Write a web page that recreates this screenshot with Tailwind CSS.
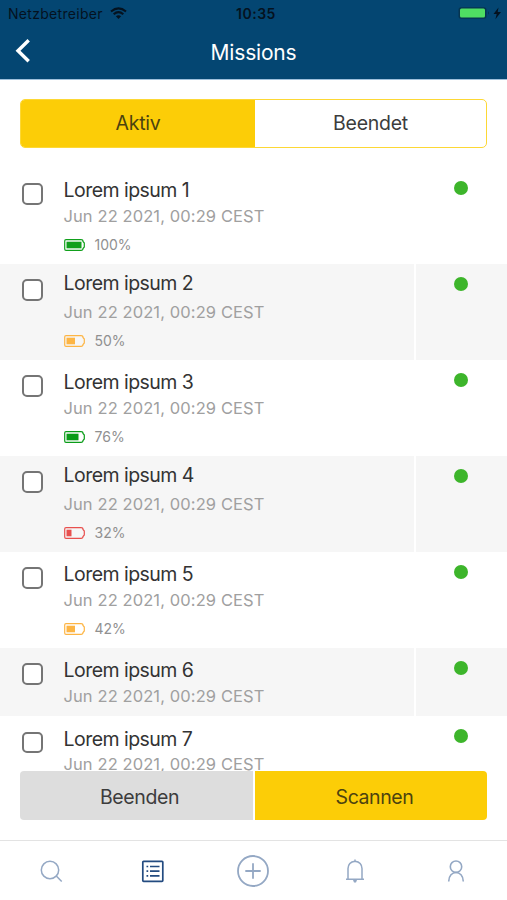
<!DOCTYPE html>
<html lang="de">
<head>
<meta charset="utf-8">
<title>Missions</title>
<script src="https://cdn.jsdelivr.net/npm/@tailwindcss/browser@4"></script>
</head>
<body class="bg-white">
<div class="relative flex h-[900px] w-[507px] flex-col overflow-hidden bg-white font-['Inter','Liberation_Sans',sans-serif] text-[#3c3c3c]">
  <header class="h-20 shrink-0 border-b border-[#9fc0dc] bg-[#044672]">
    <div class="grid h-7 grid-cols-3 items-center pr-1.5 pl-2 text-[14px] text-[#04121f]">
      <div class="-mt-0.5 flex items-center gap-[7px]">
        <span class="tracking-[0.3px]">Netzbetreiber</span>
        <svg class="h-3 w-[17px]" viewBox="0 0 17 12" fill="none" stroke="currentColor" stroke-width="2.1"><path d="M1 4.5Q8.500-1.800 16 4.500M3.700 7.300Q8.500 3 13.300 7.300"/><path d="M5.900 9.300Q8.500 7.100 11.100 9.300L8.500 12Z" fill="currentColor" stroke="none"/></svg>
      </div>
      <span class="-mt-0.5 justify-self-center pl-[3px] text-[14px] font-semibold tracking-[0.5px]">10:35</span>
      <svg class="-mt-0.5 h-4 w-[44px] justify-self-end" viewBox="0 0 44 16"><rect x="1.500" y="2.300" width="28" height="11.400" rx="2.500" fill="#063550"/><rect x="3" y="3.400" width="25" height="9.200" rx="1.500" fill="#4fdf63"/><path d="M31 6.300q2 1.700 0 3.400z" fill="#063550"/><path d="M41.500 2.500L36.500 9h3.200l-1.300 5.300L44 7h-3.300z" fill="#04121f"/></svg>
    </div>
    <div class="grid h-[48px] grid-cols-3 items-center px-[15px] text-white">
      <svg class="-mt-0.5 h-6 w-4" viewBox="0 0 16 24" fill="none" stroke="white" stroke-width="3.400"><path d="M13.700 1.300L3 11.700l10.700 10.600"/></svg>
      <h1 class="justify-self-center pt-px text-[21px] tracking-[-0.2px]">Missions</h1>
    </div>
  </header>
  <main class="relative min-h-0 flex-1 overflow-hidden">
    <div class="px-5 pt-[18.500px] pb-5">
      <div class="flex h-[49px] overflow-hidden rounded-[5px] border-[1.500px] border-[#fdd835] bg-white text-[19.500px] tracking-[-0.25px]">
        <button class="w-[234px] bg-[#fccd07] pt-0.5 text-[#4c430f]">Aktiv</button>
        <button class="flex-1 pt-0.5">Beendet</button>
      </div>
    </div>
    <div id="rows"></div>
    <div class="absolute inset-x-0 bottom-0 flex h-[69px] px-5 pb-5 text-[19.500px] tracking-[-0.4px]">
      <button class="w-[233px] rounded-l-[4px] bg-[#ddd] pt-[5px] pl-[6px]">Beenden</button>
      <span class="w-0.5 bg-white"></span>
      <button class="flex-1 rounded-r-[4px] bg-[#fccd07] pt-[5px] pl-[7px] text-[#4c430f]">Scannen</button>
    </div>
    <div class="absolute inset-x-0 bottom-0 h-5 bg-white"></div>
  </main>
  <nav class="grid h-[60px] shrink-0 grid-cols-5 items-center justify-items-center border-t border-[#e3e3e3] text-[#94a8c4]">
    <svg class="h-8 w-8" viewBox="0 0 32 32" fill="none" stroke="currentColor" stroke-width="1.500"><circle cx="15" cy="15" r="8.700"/><path d="M21.300 21l5.400 5.500"/></svg>
    <svg class="h-8 w-8 text-[#234b80]" viewBox="0 0 32 32" fill="none" stroke="currentColor" stroke-width="1.700"><rect x="6.800" y="6.300" width="20" height="20" rx=".8"/><path d="M14 11.500H23.500M14 16.200H23.500M14 20.900H23.500M10.500 11.500h1.700M10.500 16.200h1.700M10.500 20.900h1.700"/></svg>
    <svg class="h-9 w-9" viewBox="0 0 36 36" fill="none" stroke="currentColor" stroke-width="1.800"><circle cx="18" cy="18" r="15"/><path d="M18 10.300v15.400M10.300 18h15.400"/></svg>
    <svg class="h-8 w-8" viewBox="0 0 32 32" fill="none" stroke="currentColor" stroke-width="1.500"><path d="M7 24.200h18M9 24V13.500Q9.200 7 16 6.200Q22.800 7 23 13.500V24M16 4.500v2"/><path d="M14 25h4l-1 2.500h-2z" fill="currentColor" stroke="none"/></svg>
    <svg class="h-8 w-8" viewBox="0 0 32 32" fill="none" stroke="currentColor" stroke-width="1.600"><circle cx="16" cy="11.700" r="5.700"/><path d="M8.700 26.500c0-12 14.600-12 14.600 0"/></svg>
  </nav>
</div>
<script>
const missions = [[100,'#11a01c',15,96],[50,'#fdb544',8.5,96],[76,'#0a9c18',12,96],[32,'#e8504e',5,96.3],[42,'#fdb544',8.5,96],[null,'',0,68.5],[null,'',0,69]];
document.getElementById('rows').innerHTML = missions.map(([pct, color, fill, height], i) => `
<section class="flex gap-[1.500px]" style="height:${height}px">
  <div class="flex w-[414px] items-start pt-[14.500px] pl-[21.500px] ${i % 2 ? 'bg-[#f6f6f6]' : 'bg-white'}">
    <span class="mt-px h-[21.500px] w-[21.500px] shrink-0 rounded-[5px] border-2 border-[#757575] bg-white"></span>
    <div class="pl-[20.500px] ${i === 1 || i === 3 ? '-mt-[7.500px]' : '-mt-[4px]'}">
      <h2 class="text-[19.500px] leading-6 tracking-[-0.53px] text-[#333]">Lorem ipsum ${i + 1}</h2>
      <p class="text-[16.500px] leading-6 tracking-[0.1px] text-[#a0a0a0] ${i === 1 || i === 3 ? 'mt-[5px]' : 'mt-[1.500px]'}">Jun 22 2021, 00:29 CEST</p>
      ${pct === null ? '' : `<div class="mt-[7px] flex h-5 items-center gap-2.5 text-[14px] text-[#909090]">
        <svg class="h-3 w-[21px]" viewBox="0 0 21 12" fill="none"><path d="M2 .7H17Q19 .7 19 2.500L20.300 4V8L19 9.500Q19 11.300 17 11.300H2Q.7 11.300 .7 10V2Q.7 .7 2 .7Z" stroke="${color}" stroke-width="1.200"/><rect x="2.500" y="2.700" width="${fill}" height="6.600" fill="${color}"/></svg>
        <span>${pct}%</span></div>`}
    </div>
  </div>
  <div class="flex flex-1 justify-center pt-[13px] ${i % 2 ? 'bg-[#f6f6f6]' : 'bg-white'}"><span class="h-[14px] w-[14px] rounded-full bg-[#3db52b]"></span></div>
</section>`).join('');
</script>
</body>
</html>
